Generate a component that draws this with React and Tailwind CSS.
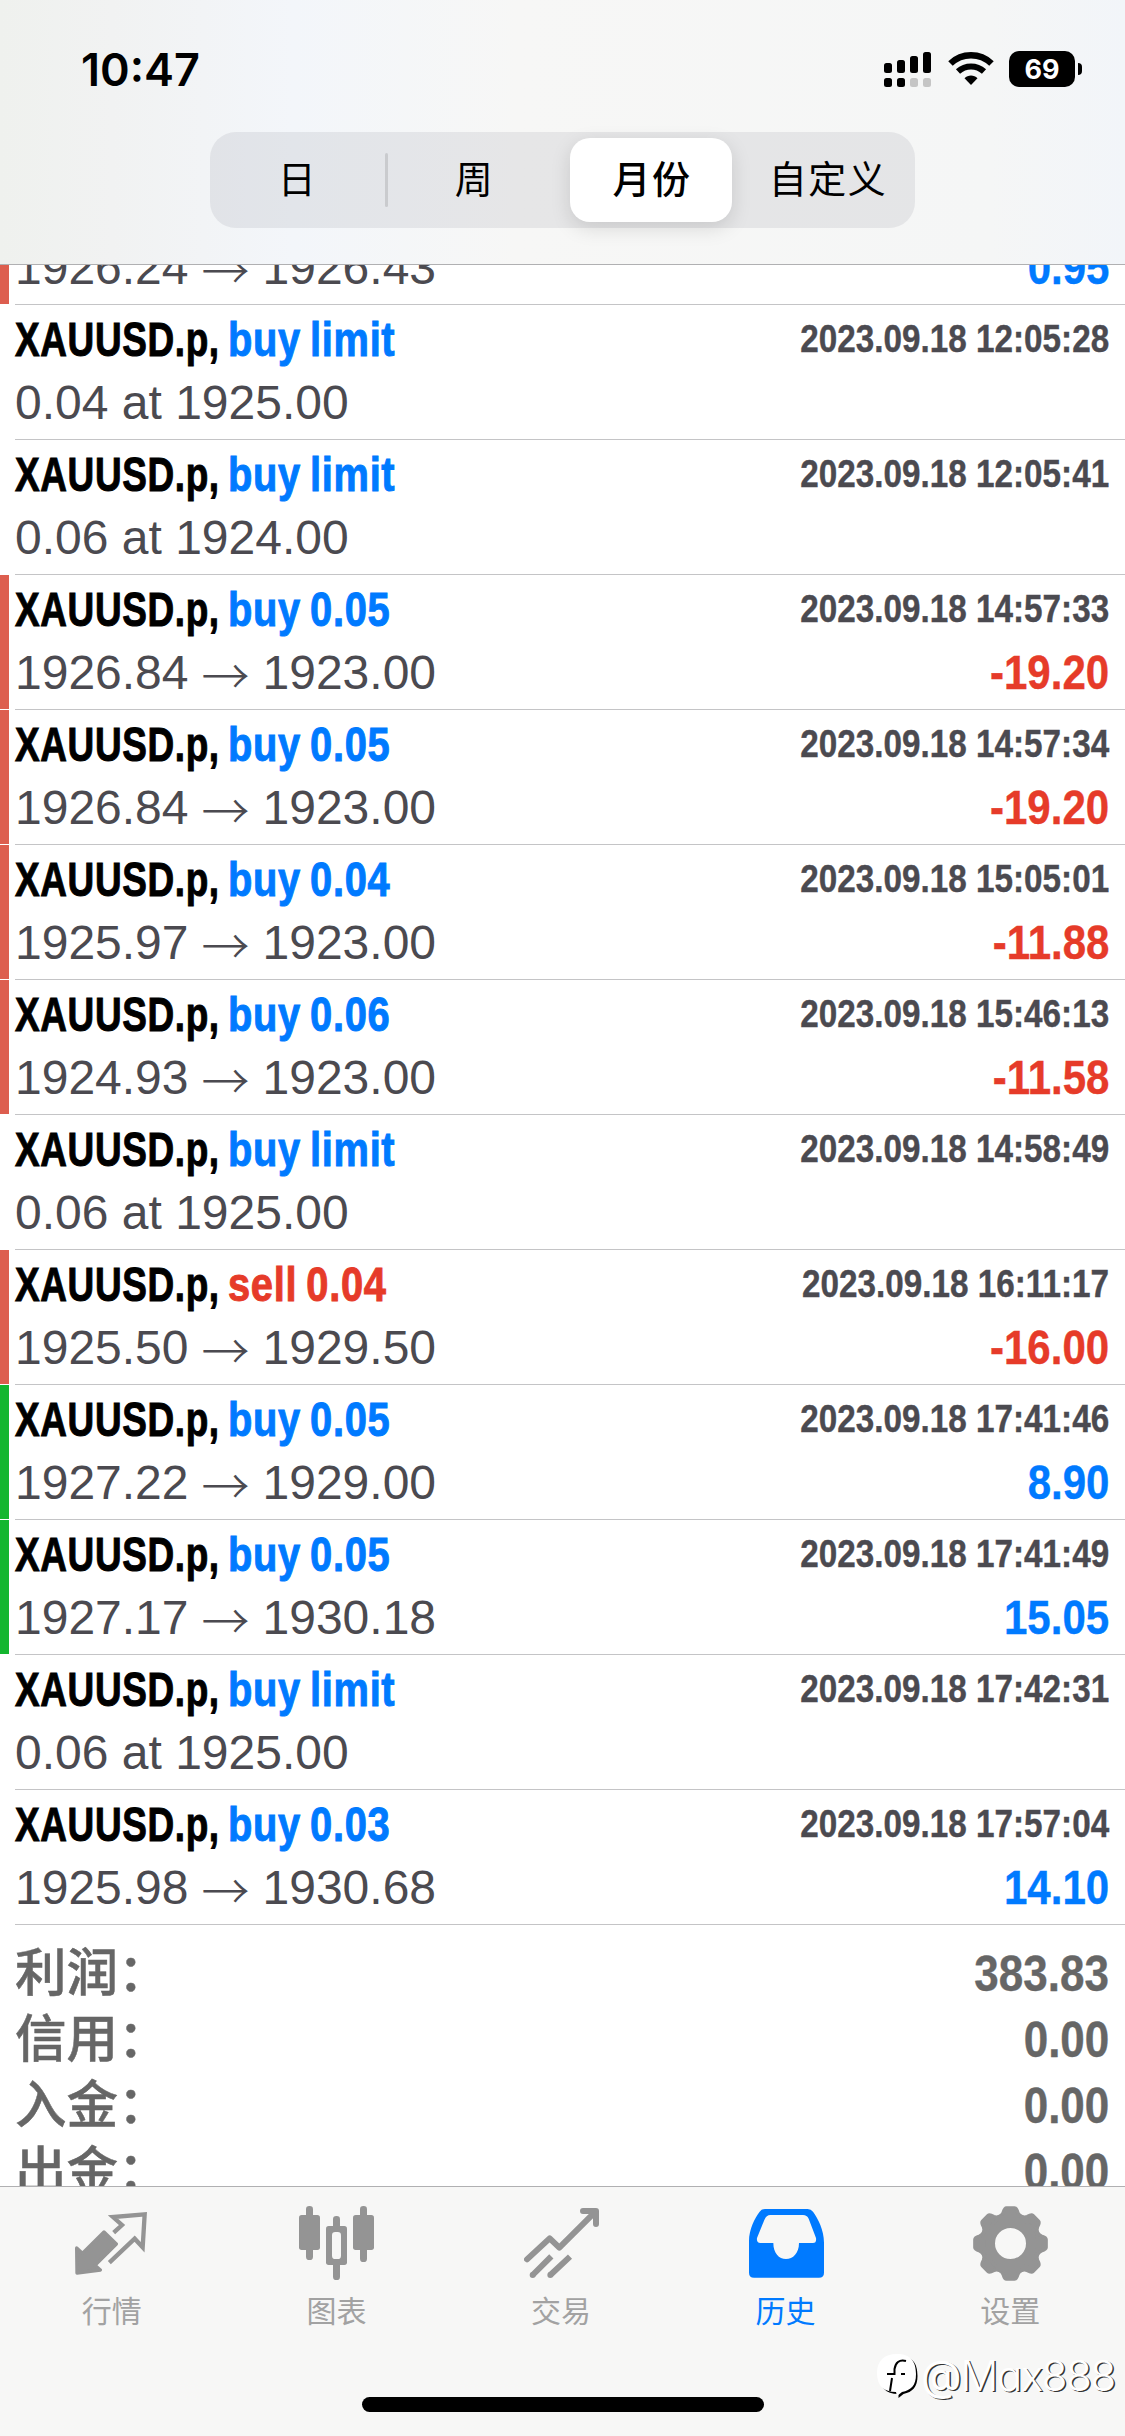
import React from "react";
import clsx from "clsx";

const DEALS = [
  { side: "buy", size: "limit", price: "0.04 at 1925.00", time: "2023.09.18 12:05:28" },
  { side: "buy", size: "limit", price: "0.06 at 1924.00", time: "2023.09.18 12:05:41" },
  { side: "buy", size: "0.05", price: "1926.84", close: "1923.00", time: "2023.09.18 14:57:33", profit: "-19.20", bar: "red" },
  { side: "buy", size: "0.05", price: "1926.84", close: "1923.00", time: "2023.09.18 14:57:34", profit: "-19.20", bar: "red" },
  { side: "buy", size: "0.04", price: "1925.97", close: "1923.00", time: "2023.09.18 15:05:01", profit: "-11.88", bar: "red" },
  { side: "buy", size: "0.06", price: "1924.93", close: "1923.00", time: "2023.09.18 15:46:13", profit: "-11.58", bar: "red" },
  { side: "buy", size: "limit", price: "0.06 at 1925.00", time: "2023.09.18 14:58:49" },
  { side: "sell", size: "0.04", price: "1925.50", close: "1929.50", time: "2023.09.18 16:11:17", profit: "-16.00", bar: "red" },
  { side: "buy", size: "0.05", price: "1927.22", close: "1929.00", time: "2023.09.18 17:41:46", profit: "8.90", bar: "green" },
  { side: "buy", size: "0.05", price: "1927.17", close: "1930.18", time: "2023.09.18 17:41:49", profit: "15.05", bar: "green" },
  { side: "buy", size: "limit", price: "0.06 at 1925.00", time: "2023.09.18 17:42:31" },
  { side: "buy", size: "0.03", price: "1925.98", close: "1930.68", time: "2023.09.18 17:57:04", profit: "14.10" },
];

const SUMMARY = [
  { label: "利润：", value: "383.83" },
  { label: "信用：", value: "0.00" },
  { label: "入金：", value: "0.00" },
  { label: "出金：", value: "0.00" },
];

function StatusBar() {
  return (
    <div className="flex h-[132px] items-start justify-between pl-[81px] pr-[43px] pt-[51px]">
      <span className="font-['Inter'] text-[45px] font-semibold leading-[37px]">10:47</span>
      <div className="flex items-start">
        <svg width="48" height="36" viewBox="0 0 48 36">
          <rect x="0" y="12" width="8" height="10" rx="2.5" />
          <rect x="13" y="9" width="8" height="13" rx="2.5" />
          <rect x="26" y="5" width="8" height="17" rx="2.5" />
          <rect x="39" y="1" width="8" height="21" rx="2.5" />
          <rect x="0" y="27" width="8" height="9" rx="2.5" />
          <rect x="13" y="27" width="8" height="9" rx="2.5" />
          <rect x="26" y="27" width="8" height="9" rx="2.5" fill="#c5c5c5" />
          <rect x="39" y="27" width="8" height="9" rx="2.5" fill="#c5c5c5" />
        </svg>
        <svg className="ml-[16px]" width="46" height="36" viewBox="0 0 46 36">
          <path d="M2.500 12.500C14 1.500 32 1.500 43.500 12.500" fill="none" stroke="#000" strokeWidth="6.500" />
          <path d="M10 20.500C17.500 13.800 28.500 13.800 36 20.500" fill="none" stroke="#000" strokeWidth="6.200" />
          <path d="M16.500 27.200C20 23.600 26 23.600 29.500 27.200L23 34Z" />
        </svg>
        <div className="ml-[15px] flex h-[36px] w-[66px] items-center justify-center rounded-[10px] bg-black font-['Inter'] text-[27px] font-bold leading-none text-white">
          69
        </div>
        <div className="ml-[3px] mt-[12px] h-[12px] w-[4px] rounded-r-full bg-black" />
      </div>
    </div>
  );
}

function PeriodPicker() {
  return (
    <div className="mx-auto flex h-[96px] w-[705px] items-center rounded-[26px] bg-[#767680]/13 text-[38px] tracking-[1.500px]">
      <div className="w-[175px] text-center">日</div>
      <div className="h-[54px] w-[3px] rounded-full bg-[#8e8e93]/30" />
      <div className="w-[173px] text-center">周</div>
      <div className="mx-[9px] flex h-[84px] w-[162px] items-center justify-center rounded-[20px] bg-white pl-[2px] font-medium shadow-[0_6px_20px_rgba(0,0,0,0.13)]">
        月份
      </div>
      <div className="flex-1 text-center">自定义</div>
    </div>
  );
}

function ResultBar({ color }) {
  return (
    <div
      className={clsx(
        "mr-[6px] w-[9px] shrink-0 border-b border-white",
        color === "red" && "bg-[#dd5e4f]",
        color === "green" && "bg-[#14b62f]"
      )}
    />
  );
}

function PriceLine({ price, close, profit }) {
  const loss = profit?.startsWith("-");

  return (
    <div className="flex h-[62px] shrink-0 items-center justify-between text-[48px]">
      <span className="flex items-center whitespace-pre text-[#4b4a50]">
        {price}
        {close && (
          <>
            <span className="mx-[13px] font-['Noto_Sans_CJK_SC'] font-light leading-none">→</span>
            {close}
          </>
        )}
      </span>
      <span
        className={clsx(
          "origin-right scale-x-[0.875] font-bold [-webkit-text-stroke:0.4px]",
          loss ? "text-[#e63b29]" : "text-[#007aff]"
        )}
      >
        {profit}
      </span>
    </div>
  );
}

function DealRow({ deal }) {
  return (
    <div className="flex h-[135px] shrink-0">
      <ResultBar color={deal.bar} />
      <div className="flex-1 border-b border-[#c4c4c6] pr-[16px] pt-[3px]">
        <div className="flex h-[64px] items-center text-[48px] font-bold">
          <span className="w-[213px] origin-left scale-x-[0.77] whitespace-nowrap tracking-[0.8px] [-webkit-text-stroke:1px]">
            XAUUSD.p,
          </span>
          <span
            className={clsx(
              "origin-left scale-x-[0.83] whitespace-nowrap tracking-[0.8px] [word-spacing:-3px] [-webkit-text-stroke:1px]",
              deal.side === "buy" ? "text-[#007aff]" : "text-[#e63b29]"
            )}
          >
            {deal.side} {deal.size}
          </span>
          <span className="mb-[2px] ml-auto origin-right scale-x-[0.853] whitespace-nowrap text-[39px] text-[#4b4a50] [-webkit-text-stroke:0.4px]">
            {deal.time}
          </span>
        </div>
        <PriceLine price={deal.price} close={deal.close} profit={deal.profit} />
      </div>
    </div>
  );
}

function QuotesIcon() {
  return (
    <svg width="75" height="75" viewBox="0 0 225 225" fill="none" stroke="currentColor">
      <path d="M5 126L22 142L87 78L124 114L60 178L76 192L6 201Z" fill="currentColor" strokeWidth="10" strokeLinejoin="round" />
      <path d="M116 80L141 57L114 33L209 25L203 124L179 98L103 170" strokeWidth="13" />
    </svg>
  );
}

function ChartIcon() {
  return (
    <svg width="75" height="75" viewBox="0 0 225 225" fill="currentColor">
      <rect x="21" width="21" height="162" rx="10" />
      <rect y="27" width="63" height="105" rx="8" />
      <rect x="102" y="30" width="21" height="192" rx="10" />
      <rect x="81" y="60" width="63" height="117" rx="8" />
      <rect x="99" y="78" width="27" height="81" rx="10" fill="#f7f7f6" />
      <rect x="183" width="21" height="168" rx="10" />
      <rect x="162" y="27" width="63" height="105" rx="8" />
    </svg>
  );
}

function TradeIcon() {
  return (
    <svg width="75" height="75" viewBox="0 0 225 225" fill="none" stroke="currentColor" strokeWidth="18">
      <path d="M9 160L77 97L106 125L212 19M177 15H216V54" strokeLinecap="round" strokeLinejoin="round" />
      <path d="M26 207L82 151M79 207L138 152" />
      <circle cx="26" cy="207" r="9" fill="currentColor" stroke="none" />
      <circle cx="79" cy="207" r="9" fill="currentColor" stroke="none" />
    </svg>
  );
}

function HistoryIcon() {
  return (
    <svg width="75" height="75" viewBox="0 0 225 225" fill="currentColor" fillRule="evenodd">
      <path d="M0 105C0 70 18 35 32 17Q38 9 48 9H176Q186 9 192 17C207 37 225 72 225 110V200Q225 215 210 215H15Q0 215 0 200ZM24 96L46 42Q52 27 64 27H162Q174 27 179 38L201 96Q203 111 192 111H150C150 142 132 159 111 159S73 142 73 111H34Q22 111 24 96Z" />
    </svg>
  );
}

function SettingsIcon() {
  return (
    <svg width="75" height="75" viewBox="-112.500 -112.500 225 225" fill="none" stroke="currentColor">
      <circle r="68" strokeWidth="43" />
      {[0, 45, 90, 135, 180, 225, 270, 315].map((angle) => (
        <path
          key={angle}
          transform={`rotate(${angle})`}
          d="M-37 -79Q-25 -84 -22 -93Q-18 -107 -12 -107H12Q18 -107 22 -93Q25 -84 37 -79Z"
          fill="currentColor"
          strokeWidth="10"
          strokeLinejoin="round"
        />
      ))}
    </svg>
  );
}

const TABS = [
  { label: "行情", Icon: QuotesIcon },
  { label: "图表", Icon: ChartIcon },
  { label: "交易", Icon: TradeIcon },
  { label: "历史", Icon: HistoryIcon, active: true },
  { label: "设置", Icon: SettingsIcon },
];

function Watermark() {
  return (
    <div className="absolute bottom-[37px] right-[10px] flex items-center">
      <svg className="mr-[2px]" width="42" height="46" viewBox="0 0 42 46">
        <path d="M20 2C34 2 39 9 39 22C39 33 34 38 25 40L20 44V40C7 40 1 33 1 21C1 8 7 2 20 2Z" transform="translate(1.500 1)" />
        <path d="M20 1C34 1 39 9 39 21C39 33 34 37 25 39L20 43L19 39C7 39 0 33 0 20C0 8 7 1 20 1Z" fill="#fff" />
        <path d="M29 8C22 6 18.500 10 17.500 16V21H10M15 25L13 38M24 21H28" fill="none" stroke="#000" strokeWidth="2" />
      </svg>
      <span className="font-['Inter'] text-[42px] font-light leading-[46px] tracking-[-1.300px] text-white [font-feature-settings:'cv11'] [text-shadow:1.5px_1px_0.5px_#333]">
        <span className="font-normal">@</span>Max888
      </span>
    </div>
  );
}

export default function App() {
  return (
    <div className="relative flex h-[2436px] w-[1125px] flex-col overflow-hidden bg-white font-['Liberation_Sans','Noto_Sans_CJK_SC',sans-serif] text-black">
      <header className="h-[265px] shrink-0 border-b border-[#b0b0b2] bg-[linear-gradient(90deg,#eff1ee_0%,#f1f2f2_10%,#f3f6fa_26%,#f7f7f6_46%,#f5f6f6_88%,#f2f5f9_100%)]">
        <StatusBar />
        <PeriodPicker />
      </header>

      {/* Scrolled deals list, the top deal is partly under the header */}
      <main className="flex min-h-0 flex-1 flex-col overflow-hidden">
        <div className="flex h-[40px] shrink-0">
          <ResultBar color="red" />
          <div className="flex flex-1 flex-col justify-end border-b border-[#c4c4c6] pb-[5px] pr-[16px]">
            <PriceLine price="1926.24" close="1926.43" profit="0.95" />
          </div>
        </div>
        {DEALS.map((deal) => (
          <DealRow key={deal.time} deal={deal} />
        ))}
        <div className="pl-[15px] pr-[16px] pt-[16px] text-[#666]">
          {SUMMARY.map(({ label, value }) => (
            <div key={label} className="flex h-[66px] items-center justify-between">
              <span className="text-[51.5px] font-medium leading-none [-webkit-text-stroke:0.5px]">{label}</span>
              <span className="origin-right scale-x-[0.88] text-[50px] font-bold leading-none [-webkit-text-stroke:0.4px]">
                {value}
              </span>
            </div>
          ))}
        </div>
      </main>

      {/* Tab bar */}
      <nav className="h-[250px] shrink-0 border-t border-[#b0b0b2] bg-[#f7f7f6]">
        <div className="flex h-[210px] pr-[2px] pt-[19px]">
          {TABS.map(({ label, Icon, active }) => (
            <div
              key={label}
              className={clsx(
                "flex flex-1 flex-col items-center",
                active ? "text-[#007aff]" : "text-[#949494]"
              )}
            >
              <Icon />
              <span className={clsx("mr-[1px] mt-[14px] text-[30px] leading-[34px]", !active && "text-[#a2a2a2]")}>
                {label}
              </span>
            </div>
          ))}
        </div>
        <div className="mx-auto h-[15px] w-[402px] rounded-full bg-black" />
      </nav>
      <Watermark />
    </div>
  );
}
